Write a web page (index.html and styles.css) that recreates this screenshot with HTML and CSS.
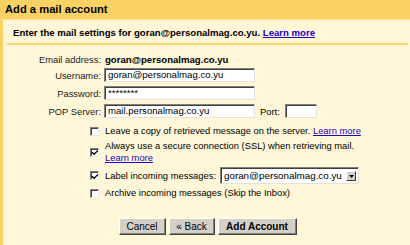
FILE: index.html
```html
<!DOCTYPE html>
<html>
<head>
<meta charset="utf-8">
<link rel="stylesheet" href="styles.css">
</head>
<body>
<div class="dialog">
  <div class="titlebar">Add a mail account</div>
  <div class="body">
    <div class="intro">Enter the mail settings for goran@personalmag.co.yu. <a href="#">Learn more</a></div>
    <div class="form">
      <div class="row first"><span class="label">Email address:</span><b class="value">goran@personalmag.co.yu</b></div>
      <div class="row"><span class="label">Username:</span><span class="field">goran@personalmag.co.yu</span></div>
      <div class="row"><span class="label">Password:</span><span class="field pw">********</span></div>
      <div class="row"><span class="label">POP Server:</span><span class="field">mail.personalmag.co.yu</span><span class="port">Port:</span><span class="field small"></span></div>
    </div>
    <div class="options">
      <div class="opt"><span class="cb"></span><span class="txt">Leave a copy of retrieved message on the server. <a href="#">Learn more</a></span></div>
      <div class="opt"><span class="cb"><svg width="7" height="7" viewBox="0 0 7 7"><path d="M0 3.2L2.5 5.6L7 1" fill="none" stroke="#000" stroke-width="1.6"/></svg></span><span class="txt">Always use a secure connection (SSL) when retrieving mail.<br><a href="#">Learn more</a></span></div>
      <div class="opt"><span class="cb"><svg width="7" height="7" viewBox="0 0 7 7"><path d="M0 3.2L2.5 5.6L7 1" fill="none" stroke="#000" stroke-width="1.6"/></svg></span><span class="txt">Label incoming messages:</span><span class="select"><span class="sel-text">goran@personalmag.co.yu</span><span class="arrow"><svg width="5" height="3" viewBox="0 0 5 3"><path d="M0 0h5L2.5 3z" fill="#000"/></svg></span></span></div>
      <div class="opt"><span class="cb"></span><span class="txt">Archive incoming messages (Skip the Inbox)</span></div>
    </div>
    <div class="buttons">
      <span class="btn cancel">Cancel</span>
      <span class="btn back">«&nbsp;Back</span>
      <span class="btn add">Add Account</span>
    </div>
  </div>
</div>
</body>
</html>
```

FILE: styles.css
```css
html, body { margin: 0; padding: 0; }
body { background: #fff7d7; font-family: "Liberation Sans", Arial, sans-serif; font-size: 9.4px; color: #000; width: 410px; height: 245px; overflow: hidden; }
.dialog { width: 410px; height: 245px; display: flex; flex-direction: column; }
.titlebar { background: #fad163; height: 20px; line-height: 19px; font-size: 11.2px; font-weight: bold; padding-left: 5px; border-bottom: 1px solid #fde39c; box-sizing: border-box; flex: none; }
.body { flex: 1; border-left: 3px solid #fad163; padding: 0 2px 0 4px; }
.intro { font-weight: bold; font-size: 9.6px; line-height: 12px; border-bottom: 2px solid #fcd36e; padding: 7px 0 4px 6px; }
a { color: #2200cc; }
.form { display: flex; flex-direction: column; gap: 4px; padding-top: 7px; margin-left: -4px; }
.row { display: flex; align-items: center; height: 14px; }
.row.first { margin-bottom: -2px; }
.label { width: 98px; text-align: right; color: #1a1a1a; margin-right: 3px; }
.value { margin-left: 1px; font-size: 9.6px; }
.field { display: block; width: 151px; height: 14px; line-height: 12px; box-sizing: border-box; border: 1px solid #7f7f7f; border-right-color: #e4e1d6; border-bottom-color: #e4e1d6; box-shadow: inset 1px 1px 0 #404040; background: #fff; padding: 0 2px 0 3px; white-space: nowrap; overflow: hidden; font-size: 9.6px; }
.pw { line-height: 11px; }
.port { margin: 0 5px 0 5px; }
.small { width: 32px; }
.options { display: flex; flex-direction: column; gap: 3px; margin: 7px 0 0 83px; }
.opt { display: flex; align-items: center; line-height: 12px; }
.cb { width: 9px; height: 9px; box-sizing: border-box; border: 1px solid #808080; border-right-color: #e8e8e8; border-bottom-color: #e8e8e8; box-shadow: inset 1px 1px 0 #404040; background: #fff; flex: none; margin-right: 6px; display: flex; align-items: center; justify-content: center; }
.cb svg { margin: 1px 0 0 1px; }
.select { display: flex; align-items: center; margin-left: 4px; height: 17px; width: 139px; box-sizing: border-box; border: 1px solid #7f7f7f; border-right-color: #e4e1d6; border-bottom-color: #e4e1d6; box-shadow: inset 1px 1px 0 #404040; background: #fff; padding: 1px 1px 0 3px; }
.sel-text { flex: 1; white-space: nowrap; overflow: hidden; font-size: 9.8px; }
.arrow { width: 10px; height: 10px; background: #d4d0c8; border: 1px solid; border-color: #fff #404040 #404040 #fff; box-sizing: border-box; display: flex; align-items: center; justify-content: center; flex: none; margin-right: 1px; }
.buttons { display: flex; justify-content: center; gap: 3px; margin-top: 19px; padding-left: 0; }
.btn { display: block; height: 17px; line-height: 15px; box-sizing: border-box; background: #d4d0c8; border: 1px solid; border-color: #fff #404040 #404040 #fff; box-shadow: inset -1px -1px 0 #808080; text-align: center; font-size: 10px; }
.cancel { width: 47px; }
.back { width: 46px; }
.add { width: 79px; font-weight: bold; }
```
